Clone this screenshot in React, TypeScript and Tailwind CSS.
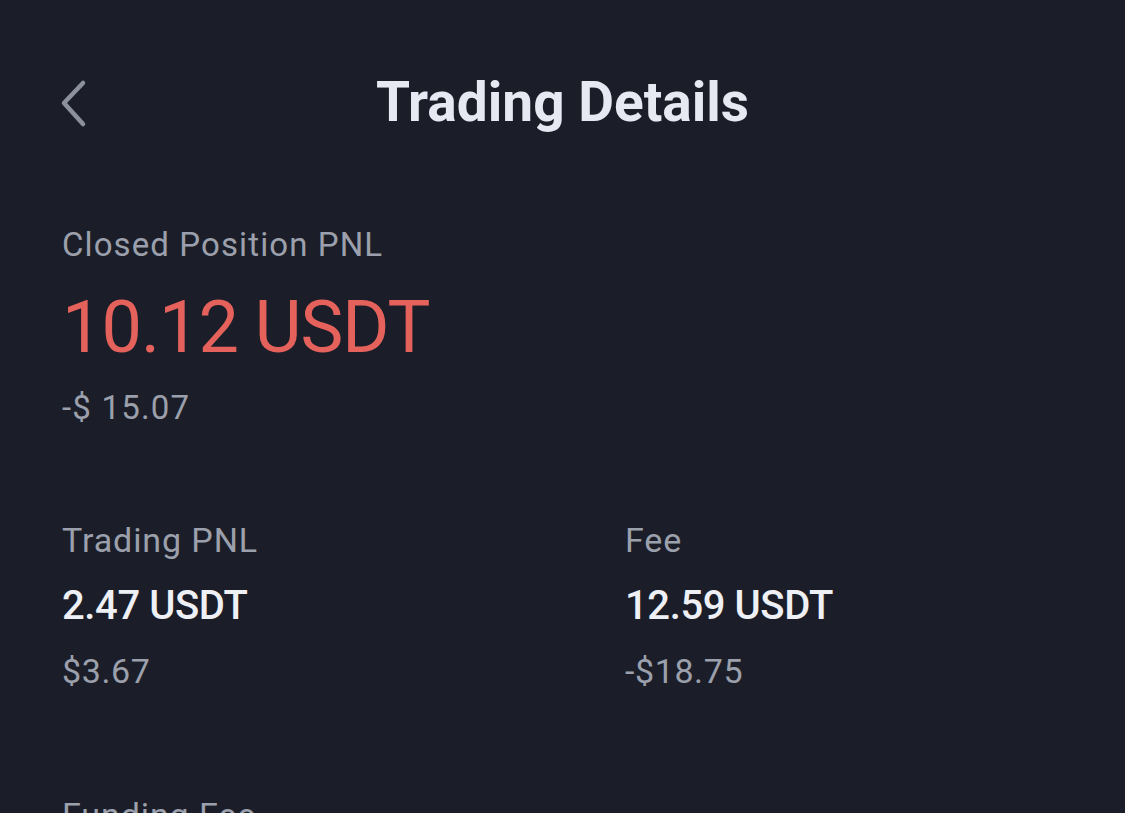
import { ReactNode } from "react";

const FONT = { fontFamily: "Roboto, 'Noto Sans', sans-serif" };

function Stat({ label, value, sub }: { label: string; value: string; sub: string }) {
  return (
    <div>
      <div className="text-[34px] leading-[34px] tracking-[0.9px] text-[#9ba0ac]">{label}</div>
      <div className="mt-[29px] text-[40px] leading-[40px] font-medium tracking-[-0.4px] text-[#eef0f5]">{value}</div>
      <div className="mt-[28px] text-[34px] leading-[34px] tracking-[0.6px] text-[#9ba0ac]">{sub}</div>
    </div>
  );
}

function Section({ children }: { children: ReactNode }) {
  return <section className="px-[62px]">{children}</section>;
}

export default function App() {
  return (
    <div className="h-[813px] w-full overflow-hidden bg-[#1b1e28]" style={FONT}>
      {/* header */}
      <header className="grid grid-cols-[1fr_auto_1fr] items-center pt-[75px] px-[60px]">
        <button className="justify-self-start" aria-label="Back">
          <svg width="32" height="50" viewBox="0 0 32 50" fill="none">
            <path d="M23 5 L4 25 L23 46" stroke="#8b909c" strokeWidth="4.5" strokeLinecap="round" strokeLinejoin="round" />
          </svg>
        </button>
        <h1 className="text-[55px] leading-[55px] font-bold text-[#e6e9f2]">Trading Details</h1>
        <div />
      </header>

      <Section>
        <div className="mt-[98px] text-[33px] leading-[33px] tracking-[1.1px] text-[#9ba0ac]">Closed Position PNL</div>
        <div className="mt-[31px] text-[72px] leading-[72px] tracking-[-1px] text-[#e5625c]">10.12 USDT</div>
        <div className="mt-[27px] text-[33px] leading-[33px] tracking-[1.2px] text-[#9ba0ac]">-$ 15.07</div>
      </Section>

      <Section>
        <div className="mt-[99px] grid grid-cols-[563px_1fr]">
          <Stat label="Trading PNL" value="2.47 USDT" sub="$3.67" />
          <Stat label="Fee" value="12.59 USDT" sub="-$18.75" />
        </div>
        <div className="mt-[110px] text-[34px] leading-[34px] tracking-[0.9px] text-[#9ba0ac]">Funding Fee</div>
      </Section>
    </div>
  );
}
